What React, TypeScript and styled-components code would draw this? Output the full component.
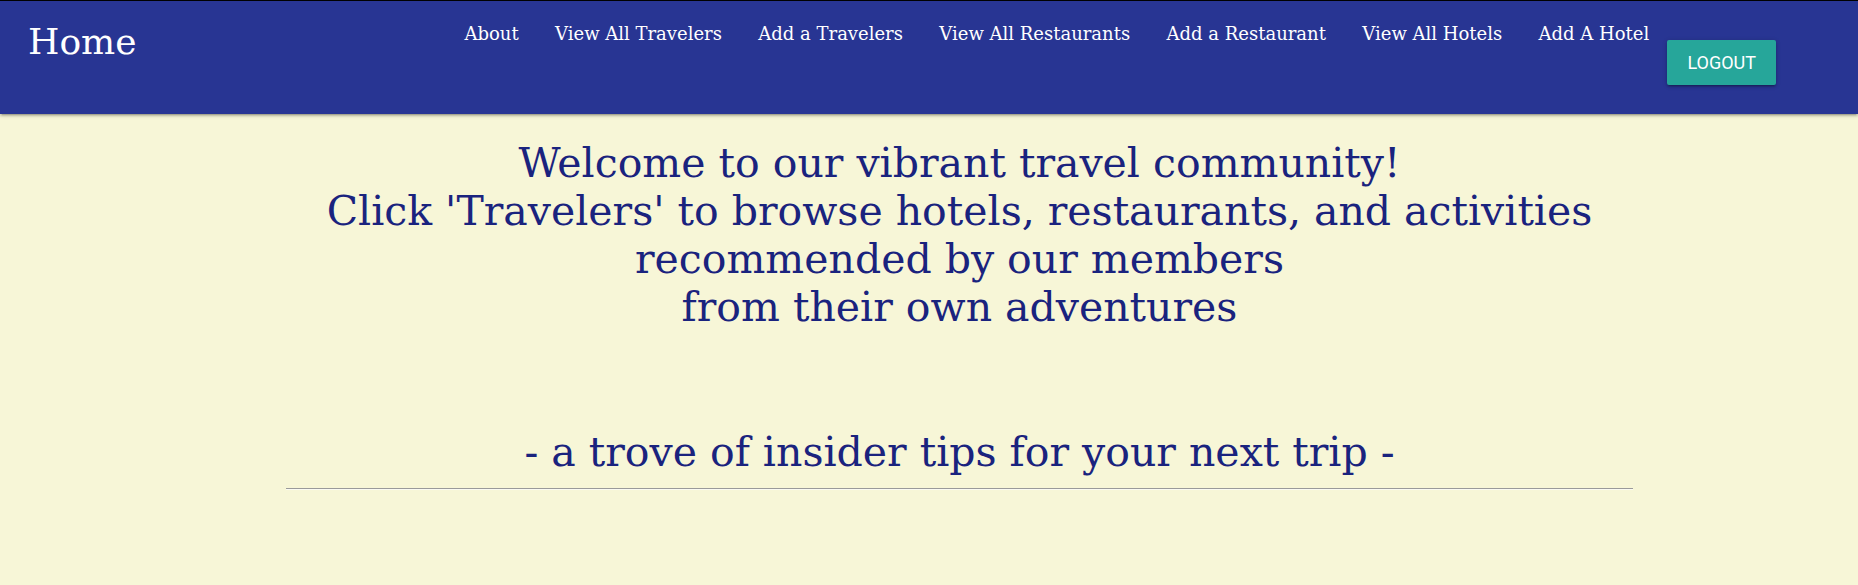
import React from "react";
import styled, { createGlobalStyle } from "styled-components";

const GlobalStyle = createGlobalStyle`
  html, body {
    margin: 0;
    padding: 0;
    background: #f7f6d7;
  }
  * { box-sizing: border-box; }
`;

const Page = styled.div`
  min-height: 585px;
  background: #f7f6d7;
  font-family: "DejaVu Serif", "Liberation Serif", serif;
`;

const NavBar = styled.nav`
  display: flex;
  align-items: flex-start;
  height: 114px;
  border-top: 1px solid #000;
  background: #283593;
  box-shadow: 0 2px 2px 0 rgba(0, 0, 0, 0.14), 0 3px 1px -2px rgba(0, 0, 0, 0.12),
    0 1px 5px 0 rgba(0, 0, 0, 0.2);
  padding-right: 82px;
`;

const Brand = styled.a`
  color: #fff;
  font-size: 36px;
  line-height: 42px;
  padding: 20px 0 0 28px;
  text-decoration: none;
`;

const Menu = styled.ul`
  display: flex;
  align-items: flex-start;
  list-style: none;
  margin: 0 0 0 auto;
  padding: 0;
`;

const MenuItem = styled.li`
  padding-top: 22px;
`;

const MenuLink = styled.a`
  display: block;
  padding: 0 18.2px;
  color: #fff;
  font-size: 18px;
  line-height: 21px;
  text-decoration: none;
  white-space: nowrap;
`;

const LogoutButton = styled.button`
  margin-top: 39px;
  height: 45px;
  padding: 0 20px;
  border: none;
  border-radius: 2px;
  background: #26a69a;
  color: #fff;
  font-family: Roboto, "Noto Sans", sans-serif;
  font-size: 18px;
  text-transform: uppercase;
  box-shadow: 0 2px 2px 0 rgba(0, 0, 0, 0.14), 0 3px 1px -2px rgba(0, 0, 0, 0.12),
    0 1px 5px 0 rgba(0, 0, 0, 0.2);
  cursor: pointer;
`;

const Main = styled.main`
  padding-left: 61px;
  display: flex;
  flex-direction: column;
  align-items: center;
  color: #1a237e;
  text-align: center;
`;

const Welcome = styled.h1`
  margin: 25px 0 0;
  font-weight: normal;
  font-size: 41px;
  line-height: 48px;
`;

const Tagline = styled.h2`
  margin: 97px 0 0;
  font-weight: normal;
  font-size: 41px;
  line-height: 48px;
`;

const Rule = styled.hr`
  width: 75%;
  margin: 12px 0 0;
  border: none;
  border-top: 1px solid #9a9a9a;
  border-bottom: 1px solid #fbfbf2;
`;

const links = [
  "About",
  "View All Travelers",
  "Add a Travelers",
  "View All Restaurants",
  "Add a Restaurant",
  "View All Hotels",
  "Add A Hotel",
];

export default function App() {
  return (
    <Page>
      <GlobalStyle />
      <NavBar>
        <Brand href="#">Home</Brand>
        <Menu>
          {links.map((l) => (
            <MenuItem key={l}>
              <MenuLink href="#">{l}</MenuLink>
            </MenuItem>
          ))}
        </Menu>
        <LogoutButton>Logout</LogoutButton>
      </NavBar>
      <Main>
        <Welcome>
          Welcome to our vibrant travel community!
          <br />
          Click 'Travelers' to browse hotels, restaurants, and activities
          <br />
          recommended by our members
          <br />
          from their own adventures
        </Welcome>
        <Tagline>- a trove of insider tips for your next trip -</Tagline>
        <Rule />
      </Main>
    </Page>
  );
}
